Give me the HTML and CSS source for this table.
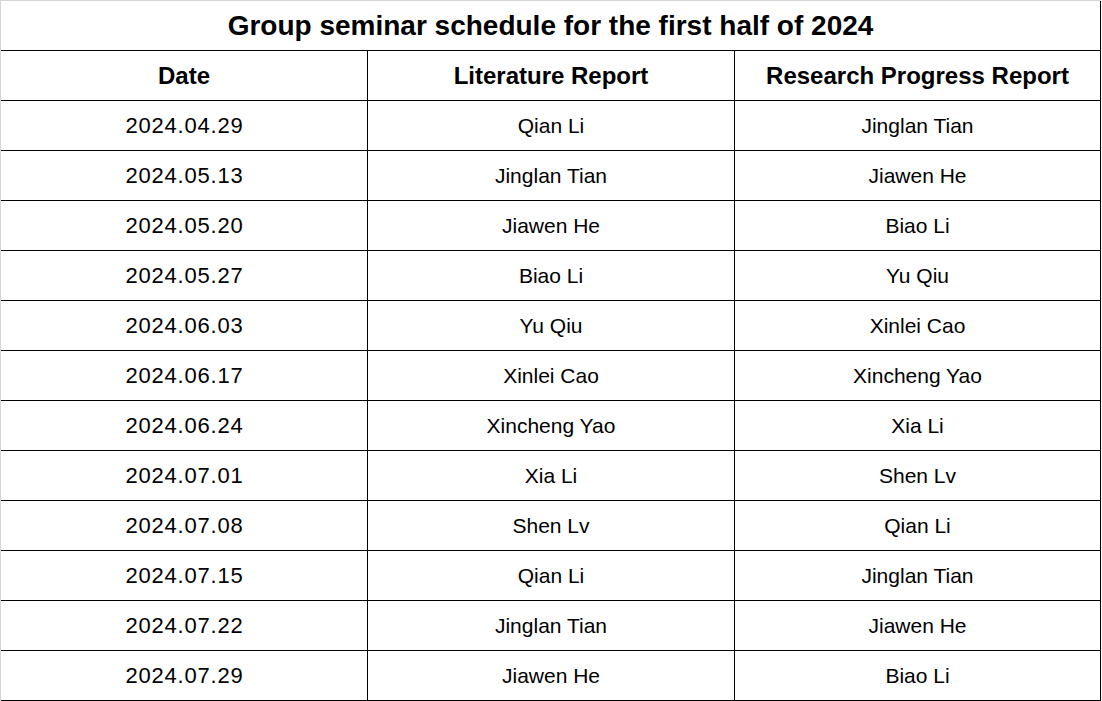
FILE: index.html
```html
<!DOCTYPE html>
<html lang="en">
<head>
<meta charset="utf-8">
<title>Group seminar schedule</title>
<link rel="stylesheet" href="styles.css">
</head>
<body>
<div class="sheet">
  <div class="cell title">Group seminar schedule for the first half of 2024</div>
  <div class="cell head">Date</div>
  <div class="cell head">Literature Report</div>
  <div class="cell head">Research Progress Report</div>

  <div class="cell date">2024.04.29</div><div class="cell name">Qian Li</div><div class="cell name">Jinglan Tian</div>
  <div class="cell date">2024.05.13</div><div class="cell name">Jinglan Tian</div><div class="cell name">Jiawen He</div>
  <div class="cell date">2024.05.20</div><div class="cell name">Jiawen He</div><div class="cell name">Biao Li</div>
  <div class="cell date">2024.05.27</div><div class="cell name">Biao Li</div><div class="cell name">Yu Qiu</div>
  <div class="cell date">2024.06.03</div><div class="cell name">Yu Qiu</div><div class="cell name">Xinlei Cao</div>
  <div class="cell date">2024.06.17</div><div class="cell name">Xinlei Cao</div><div class="cell name">Xincheng Yao</div>
  <div class="cell date">2024.06.24</div><div class="cell name">Xincheng Yao</div><div class="cell name">Xia Li</div>
  <div class="cell date">2024.07.01</div><div class="cell name">Xia Li</div><div class="cell name">Shen Lv</div>
  <div class="cell date">2024.07.08</div><div class="cell name">Shen Lv</div><div class="cell name">Qian Li</div>
  <div class="cell date">2024.07.15</div><div class="cell name">Qian Li</div><div class="cell name">Jinglan Tian</div>
  <div class="cell date">2024.07.22</div><div class="cell name">Jinglan Tian</div><div class="cell name">Jiawen He</div>
  <div class="cell date">2024.07.29</div><div class="cell name">Jiawen He</div><div class="cell name">Biao Li</div>
</div>
</body>
</html>
```

FILE: styles.css
```css
html, body {
  margin: 0;
  padding: 0;
  background: #ffffff;
}

.sheet {
  box-sizing: border-box;
  width: 1101px;
  border-top: 1px solid #d4d4d4;
  border-left: 1px solid #d4d4d4;
  display: grid;
  grid-template-columns: 367px 367px 366px;
  grid-auto-rows: 50px;
  font-family: "Liberation Sans", Arial, sans-serif;
  color: #000000;
}

.cell {
  box-sizing: border-box;
  border-right: 1px solid #000000;
  border-bottom: 1px solid #000000;
  display: flex;
  align-items: center;
  justify-content: center;
  font-size: 24px;
  white-space: nowrap;
}

.title {
  grid-column: 1 / 4;
  font-size: 28px;
  font-weight: bold;
}

.head {
  font-weight: bold;
}

.date {
  font-size: 22px;
  letter-spacing: 0.8px;
  padding-left: 1px;
}

.name {
  font-size: 21px;
  padding-top: 1px;
}
```
